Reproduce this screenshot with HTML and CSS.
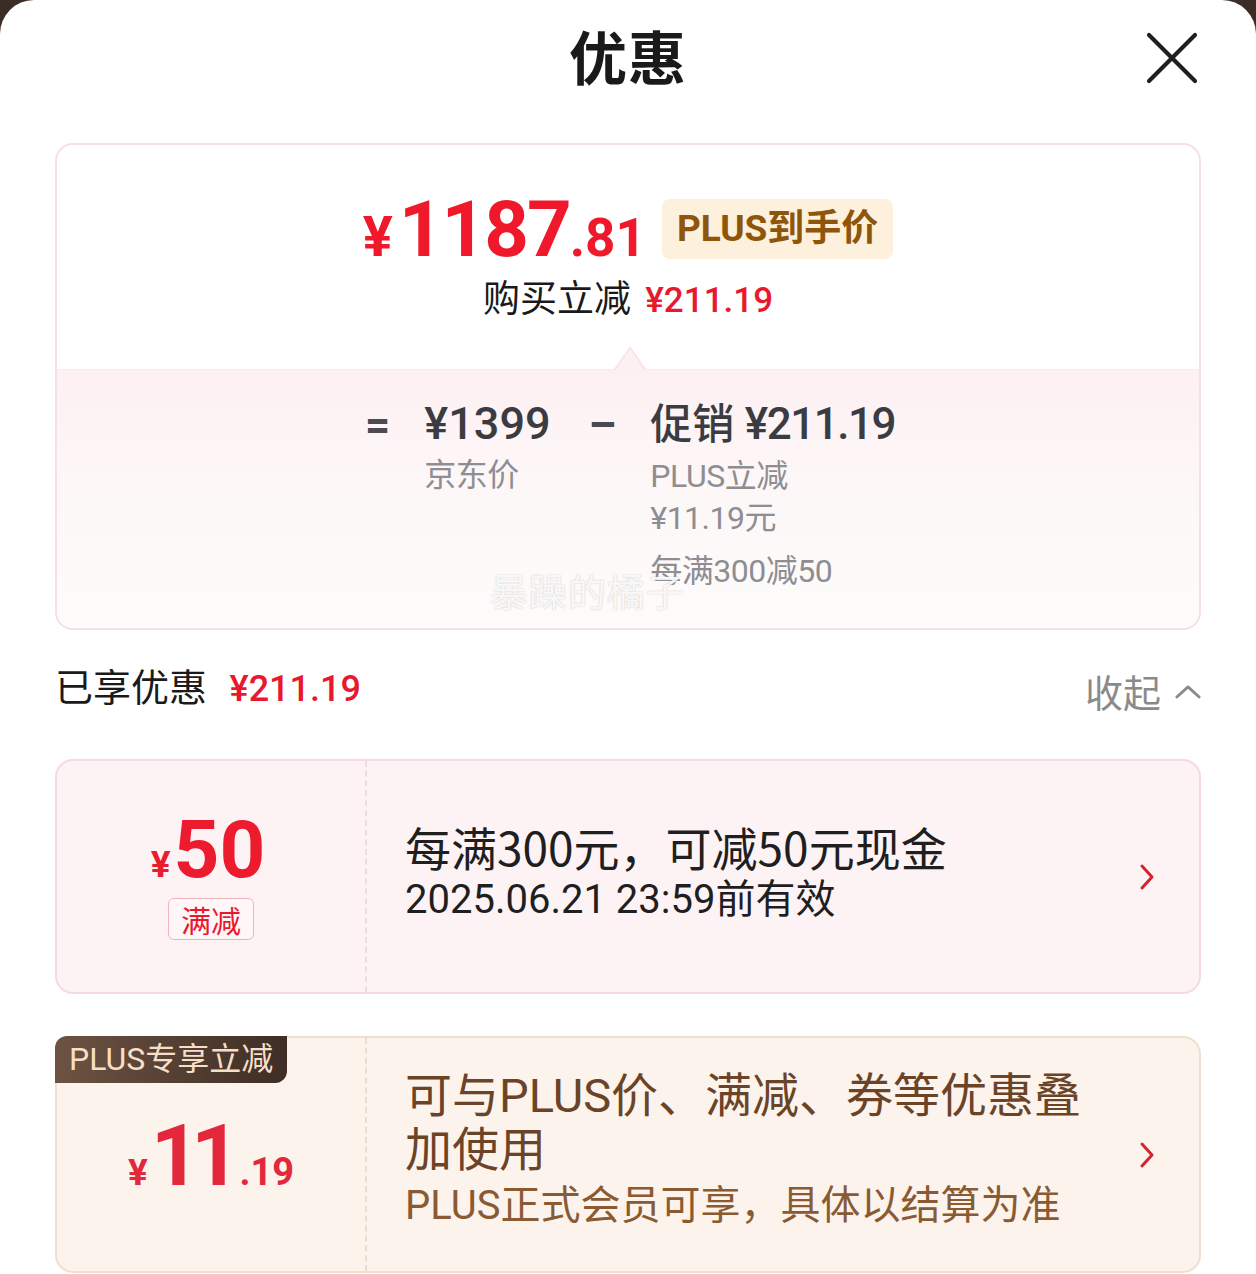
FILE: index.html
```html
<!DOCTYPE html>
<html lang="zh-CN">
<head>
<meta charset="utf-8">
<title>优惠</title>
<link rel="stylesheet" href="styles.css">
</head>
<body>
<div class="sheet">
  <header class="head">
    <h1 class="title">优惠</h1>
    <button class="close" aria-label="关闭">
      <svg viewBox="0 0 52 52" width="52" height="52"><path d="M3 3 L49 49 M49 3 L3 49" stroke="#1f1f1f" stroke-width="4.2" stroke-linecap="round" fill="none"/></svg>
    </button>
  </header>

  <section class="summary">
    <div class="sum-top">
      <div class="final">
        <span class="f-yen">¥</span><span class="f-int">1187</span><span class="f-dec">.81</span>
        <span class="plus-badge">PLUS到手价</span>
      </div>
      <div class="reduce">购买立减 <span class="reduce-amt">¥211.19</span></div>
    </div>
    <div class="sum-bottom">
      <div class="formula">
        <span class="op op-eq">=</span>
        <div class="term">
          <div class="amt">¥1399</div>
          <div class="lbl">京东价</div>
        </div>
        <span class="op op-minus">–</span>
        <div class="term">
          <div class="amt amt-promo">促销 <span class="amt-num">¥211.19</span></div>
          <div class="lbl">PLUS立减</div>
          <div class="lbl">¥11.19元</div>
          <div class="lbl lbl-gap">每满300减50</div>
        </div>
      </div>
      <div class="watermark">暴躁的橘子</div>
    </div>
  </section>

  <div class="enjoy">
    <div class="enjoy-left">已享优惠 <span class="enjoy-amt">¥211.19</span></div>
    <div class="collapse">收起
      <svg viewBox="0 0 28 16" width="26" height="15"><path d="M2 14 L14 3 L26 14" stroke="#8a8a8a" stroke-width="3" fill="none" stroke-linecap="round" stroke-linejoin="round"/></svg>
    </div>
  </div>

  <div class="coupon coupon-red">
    <div class="c-left">
      <div class="c-amt"><span class="c-yen">¥</span><span class="c-int">50</span></div>
      <span class="c-tag">满减</span>
    </div>
    <div class="c-right">
      <div class="c-title">每满300元，可减50元现金</div>
      <div class="c-sub">2025.06.21 23:59前有效</div>
    </div>
    <svg class="chev" viewBox="0 0 16 28" width="16" height="28"><path d="M3 3 L13 14 L3 25" stroke="#d3242f" stroke-width="3" fill="none" stroke-linecap="round" stroke-linejoin="round"/></svg>
  </div>

  <div class="coupon coupon-plus">
    <span class="plus-tag">PLUS专享立减</span>
    <div class="c-left">
      <div class="c-amt plus-amt"><span class="c-yen">¥</span><span class="c-int">11</span><span class="c-dec">.19</span></div>
    </div>
    <div class="c-right">
      <div class="p-title">可与PLUS价、满减、券等优惠叠加使用</div>
      <div class="p-sub">PLUS正式会员可享，具体以结算为准</div>
    </div>
    <svg class="chev" viewBox="0 0 16 28" width="16" height="28"><path d="M3 3 L13 14 L3 25" stroke="#d3242f" stroke-width="3" fill="none" stroke-linecap="round" stroke-linejoin="round"/></svg>
  </div>
</div>
</body>
</html>
```

FILE: styles.css
```css
* { box-sizing: border-box; margin: 0; padding: 0; }
html, body { height: 100%; }
body {
  background: #3b2d25;
  font-family: "Noto Sans CJK SC", "Noto Sans", sans-serif;
  overflow: hidden;
}
.sheet {
  background: #ffffff;
  border-radius: 34px 34px 0 0;
  min-height: 1274px;
  padding: 0 55px;
}
.head {
  height: 143px;
  display: flex;
  align-items: flex-start;
  justify-content: center;
  position: relative;
}
.title {
  margin-top: 15px;
  font-size: 58px;
  line-height: 80px;
  font-weight: 700;
  color: #1a1a1a;
  letter-spacing: 1px;
}
.close {
  position: absolute;
  right: 3px;
  top: 32px;
  border: 0;
  background: transparent;
  width: 52px;
  height: 52px;
}
.close svg { display: block; }

/* summary card */
.summary {
  border: 2px solid #f7dfe5;
  border-radius: 18px;
  overflow: hidden;
}
.sum-top {
  height: 224px;
  background: #fff;
  display: flex;
  flex-direction: column;
  align-items: center;
  padding-top: 46px;
}
.final {
  display: flex;
  align-items: baseline;
  color: #f0192c;
  font-family: "Roboto", "Liberation Sans", sans-serif;
  font-weight: 700;
  line-height: 1;
  height: 80px;
}
.f-yen { font-size: 56px; margin-right: 6px; }
.f-int { font-size: 78px; letter-spacing: -2px; }
.f-dec { font-size: 53px; }
.plus-badge {
  align-self: center;
  margin-left: 16px;
  background: #fdf0dc;
  color: #8e560b;
  border-radius: 8px;
  font-family: "Roboto", "Noto Sans CJK SC", sans-serif;
  font-size: 37px;
  font-weight: 700;
  line-height: 60px;
  height: 60px;
  padding: 0 15px;
  position: relative;
  top: -2px;
}
.reduce {
  font-size: 37px;
  line-height: 50px;
  color: #1a1a1a;
}
.reduce-amt {
  color: #e8192e;
  font-family: "Roboto", sans-serif;
  font-size: 35px;
  font-weight: 500;
  margin-left: 6px;
}
.sum-bottom {
  position: relative;
  height: 259px;
  background: linear-gradient(180deg, #fdf0f2 0%, #fdf8f8 50%, #fefbfb 100%);
  border-top: 1px solid #fbe6ea;
  padding-top: 24px;
}
.sum-bottom::before {
  content: "";
  position: absolute;
  top: -24px;
  left: 50%;
  margin-left: -14px;
  width: 0; height: 0;
  border-left: 16px solid transparent;
  border-right: 16px solid transparent;
  border-bottom: 23px solid #fbe4e9;
}
.sum-bottom::after {
  content: "";
  position: absolute;
  top: -21px;
  left: 50%;
  margin-left: -12px;
  width: 0; height: 0;
  border-left: 14px solid transparent;
  border-right: 14px solid transparent;
  border-bottom: 21px solid #fdf0f2;
}
.formula {
  display: flex;
  justify-content: center;
  align-items: flex-start;
  padding-left: 4px;
}
.op {
  font-family: "Roboto", sans-serif;
  font-weight: 700;
  font-size: 44px;
  line-height: 62px;
  color: #4a4a52;
}
.op-eq { margin-right: 34px; }
.op-minus { margin: 0 34px 0 38px; }
.term { display: flex; flex-direction: column; }
.amt {
  font-size: 45px;
  line-height: 60px;
  font-weight: 500;
  color: #3b3b42;
  font-family: "Roboto", "Noto Sans CJK SC", sans-serif;
  letter-spacing: 0;
}
.amt-promo { font-size: 42px; }
.amt-num { font-size: 44px; letter-spacing: -1.5px; }
.lbl {
  font-size: 32px;
  line-height: 42px;
  color: #8e8e92;
  font-family: "Roboto", "Noto Sans CJK SC", sans-serif;
  letter-spacing: -0.5px;
}
.lbl-gap { margin-top: 11px; }
.watermark {
  position: absolute;
  left: 433px;
  top: 192px;
  font-size: 38px;
  color: rgba(255, 255, 255, 0.9);
  text-shadow: 0 0 1px rgba(170, 160, 160, 0.5), 0 0 2px rgba(200, 190, 190, 0.4);
  letter-spacing: 1px;
}

/* enjoyed */
.enjoy {
  display: flex;
  justify-content: space-between;
  align-items: flex-start;
  margin-top: 30px;
  height: 99px;
}
.enjoy-left {
  font-size: 38px;
  line-height: 50px;
  color: #1a1a1a;
}
.enjoy-amt {
  color: #e8192e;
  font-family: "Roboto", sans-serif;
  font-size: 36px;
  font-weight: 500;
  margin-left: 14px;
}
.collapse {
  margin-top: 6px;
  font-size: 38px;
  line-height: 50px;
  color: #8a8a8a;
  display: flex;
  align-items: center;
  gap: 14px;
}

/* coupons */
.coupon {
  position: relative;
  display: flex;
  align-items: center;
  border-radius: 18px;
}
.coupon-red {
  height: 235px;
  background: #fdf3f5;
  border: 2px solid #f6dae0;
}
.coupon-plus {
  margin-top: 42px;
  height: 237px;
  background: #fbf3ec;
  border: 2px solid #eedfcf;
}
.c-left {
  width: 310px;
  height: 100%;
  display: flex;
  flex-direction: column;
  align-items: center;
  justify-content: center;
  border-right: 2px dashed #f0dcdf;
}
.coupon-plus .c-left { border-right-color: #ecdccd; }
.c-amt {
  color: #ec1b2e;
  font-family: "Roboto", sans-serif;
  font-weight: 700;
  line-height: 1;
  display: flex;
  align-items: baseline;
}
.c-yen { font-size: 37px; margin-right: 3px; }
.c-int { font-size: 80px; }
.c-dec { font-size: 38px; }
.coupon-red .c-amt { margin-top: -4px; margin-left: -6px; }
.c-tag {
  margin-top: 8px;
  border: 1.5px solid #f2b4bc;
  border-radius: 6px;
  color: #e8192e;
  font-size: 30px;
  line-height: 40px;
  padding: 0 12px;
  background: #fff6f7;
}
.plus-amt { color: #e3283c; margin-top: 2px; }
.plus-amt .c-int { font-size: 86px; letter-spacing: -9px; margin-right: 8px; }
.c-right {
  flex: 1;
  padding-left: 38px;
  padding-right: 100px;
}
.c-title {
  font-size: 46px;
  line-height: 56px;
  color: #1f1f1f;
}
.c-sub {
  font-size: 40px;
  line-height: 52px;
  color: #1f1f1f;
  font-family: "Roboto", "Noto Sans CJK SC", sans-serif;
}
.coupon-red .c-right { margin-top: -10px; }
.chev {
  position: absolute;
  right: 44px;
  top: 50%;
  margin-top: -14px;
}
.plus-tag {
  position: absolute;
  left: -2px;
  top: -2px;
  height: 47px;
  padding: 0 14px;
  background: linear-gradient(90deg, #6d5343 0%, #3e2e25 100%);
  color: #f6dfc6;
  font-size: 32px;
  line-height: 47px;
  border-radius: 12px 0 12px 0;
  font-family: "Roboto", "Noto Sans CJK SC", sans-serif;
  z-index: 1;
}
.p-title {
  font-size: 47px;
  line-height: 54px;
  color: #6b4428;
  font-family: "Roboto", "Noto Sans CJK SC", sans-serif;
}
.p-sub {
  font-size: 40px;
  line-height: 58px;
  color: #8a5a32;
  font-family: "Roboto", "Noto Sans CJK SC", sans-serif;
}
.coupon-plus .c-right { margin-top: -6px; padding-right: 80px; }
```
